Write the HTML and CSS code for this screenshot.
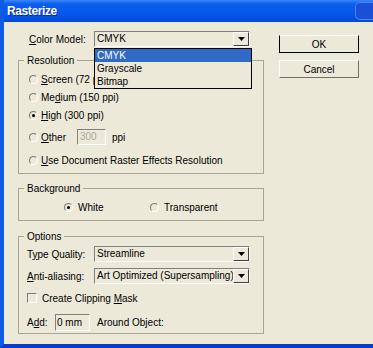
FILE: index.html
```html
<!DOCTYPE html>
<html>
  <head>
    <title>Rasterize</title>
    <link rel="stylesheet" href="styles.css">
  </head>
  <body>
    <div class="window">
      <div class="titlebar">
        <span class="title">Rasterize</span>
        <span class="title-cap"></span>
      </div>

      <div class="client">
        <div class="main">
          <div class="field-row top-row">
            <span class="field-label"><u>C</u>olor Model:</span>
            <div class="combo">
              <span class="combo-value">CMYK</span>
              <span class="combo-btn">
                <svg width="7" height="4" viewBox="0 0 7 4"><polygon points="0,0 7,0 3.5,4" fill="#000"/></svg>
              </span>
              <ul class="combo-list">
                <li class="selected">CMYK</li>
                <li>Grayscale</li>
                <li>Bitmap</li>
              </ul>
            </div>
          </div>

          <div class="group">
            <span class="legend">Resolution</span>
            <div class="group-body">
              <div class="option"><span class="radio"></span><span><u>S</u>creen (72 ppi)</span></div>
              <div class="option"><span class="radio"></span><span>Me<u>d</u>ium (150 ppi)</span></div>
              <div class="option"><span class="radio checked"></span><span><u>H</u>igh (300 ppi)</span></div>
              <div class="option option-other">
                <span class="radio"></span>
                <span class="other-label"><u>O</u>ther</span>
                <span class="textbox disabled">300</span>
                <span class="unit">ppi</span>
              </div>
              <div class="option option-last"><span class="radio"></span><span><u>U</u>se Document Raster Effects Resolution</span></div>
            </div>
          </div>

          <div class="group group-background">
            <span class="legend">Background</span>
            <div class="group-body bg-row">
              <div class="option bg-white"><span class="radio checked"></span><span>White</span></div>
              <div class="option"><span class="radio"></span><span>Transparent</span></div>
            </div>
          </div>

          <div class="group group-options">
            <span class="legend">Options</span>
            <div class="group-body">
              <div class="field-row">
                <span class="field-label label-inset">T<u>y</u>pe Quality:</span>
                <div class="combo">
                  <span class="combo-value">Streamline</span>
                  <span class="combo-btn">
                    <svg width="7" height="4" viewBox="0 0 7 4"><polygon points="0,0 7,0 3.5,4" fill="#000"/></svg>
                  </span>
                </div>
              </div>
              <div class="field-row second-combo">
                <span class="field-label label-inset"><u>A</u>nti-aliasing:</span>
                <div class="combo">
                  <span class="combo-value">Art Optimized (Supersampling)</span>
                  <span class="combo-btn">
                    <svg width="7" height="4" viewBox="0 0 7 4"><polygon points="0,0 7,0 3.5,4" fill="#000"/></svg>
                  </span>
                </div>
              </div>
              <div class="check-row">
                <span class="checkbox"></span>
                <span>Create Clipping <u>M</u>ask</span>
              </div>
              <div class="add-row">
                <span class="add-label">A<u>d</u>d:</span>
                <span class="textbox add-box">0 mm</span>
                <span class="add-after">Around Object:</span>
              </div>
            </div>
          </div>
        </div>

        <div class="buttons">
          <div class="btn btn-default">OK</div>
          <div class="btn">Cancel</div>
        </div>
      </div>
    </div>
  </body>
</html>
```

FILE: styles.css
```css
* {
  box-sizing: border-box;
  margin: 0;
  padding: 0;
}

body {
  width: 373px;
  height: 348px;
  overflow: hidden;
  background-color: #ECE9D8;
  font-family: "Liberation Sans", Arial, sans-serif;
  font-size: 10px;
  color: #000;
}

u {
  text-decoration: underline;
}

/* Ventana */
.window {
  height: 348px;
  display: flex;
  flex-direction: column;
  border-left: 4px solid #0C5AE6;
  border-bottom: 4px solid #0A3CCB;
  background-color: #ECE9D8;
}

.titlebar {
  position: relative;
  flex: none;
  height: 22px;
  display: flex;
  align-items: center;
  padding-left: 3px;
  overflow: hidden;
  background: linear-gradient(#3A86FA, #0B5FEC 18%, #0557EA 65%, #0449D6);
}

.title {
  font-size: 12px;
  font-weight: bold;
  letter-spacing: -0.4px;
  color: #fff;
  text-shadow: 1px 1px 0 #0A2F95;
}

.title-cap {
  position: absolute;
  right: -8px;
  top: 2px;
  width: 26px;
  height: 18px;
  border-radius: 5px;
  background: #1A4FD6;
  border: 1px solid #4A88F2;
}

.client {
  flex: 1;
  display: flex;
  gap: 15px;
  padding: 9px 0 0 14px;
}

.main {
  width: 246px;
}

/* Filas con etiqueta y combo */
.field-row {
  display: flex;
  align-items: center;
  height: 16px;
}

.field-label {
  width: 76px;
  padding-left: 11px;
}

.label-inset {
  width: 67px;
  padding-left: 0;
}

.combo {
  position: relative;
  width: 156px;
  height: 16px;
  display: flex;
  border: 1px solid;
  border-color: #808080 #fff #fff #808080;
}

.combo-value {
  flex: 1;
  padding-left: 2px;
  line-height: 14px;
  white-space: nowrap;
  overflow: hidden;
}

.combo-btn {
  width: 16px;
  display: flex;
  align-items: center;
  justify-content: center;
  border: 1px solid;
  border-color: #fff #404040 #404040 #fff;
}

.combo-list {
  position: absolute;
  left: -1px;
  top: 16px;
  width: 158px;
  list-style-type: none;
  border: 1px solid #000;
  background-color: #ECE9D8;
  z-index: 2;
}

.combo-list li {
  height: 13px;
  line-height: 13px;
  padding-left: 2px;
}

.combo-list li.selected {
  background-color: #316AC5;
  color: #fff;
}

/* Grupos */
.group {
  margin-top: 13px;
  border: 1px solid #A7A594;
  padding-bottom: 3px;
}

.group-background {
  margin-top: 14px;
  padding-bottom: 4px;
}

.group-options {
  margin-top: 15px;
  padding-bottom: 2px;
}

.legend {
  display: block;
  width: max-content;
  margin: -7px 0 0 5px;
  padding: 0 3px;
  line-height: 13px;
  background-color: #ECE9D8;
}

.group-body {
  padding-top: 3px;
}

.group-options .group-body {
  padding: 3px 0 0 8px;
}

.option {
  display: flex;
  align-items: center;
  gap: 3px;
  height: 18px;
  padding-left: 10px;
}

.option-other {
  height: 26px;
}

.option-last {
  height: 20px;
}

.radio {
  position: relative;
  width: 9px;
  height: 9px;
  border-radius: 50%;
  border: 1px solid;
  border-color: #7A7A7A #fff #fff #7A7A7A;
}

.radio.checked::after {
  content: "";
  position: absolute;
  left: 2px;
  top: 2px;
  width: 3px;
  height: 3px;
  border-radius: 50%;
  background-color: #000;
}

.other-label {
  width: 33px;
}

.textbox {
  height: 16px;
  line-height: 14px;
  padding-left: 2px;
  border: 1px solid;
  border-color: #808080 #fff #fff #808080;
}

.textbox.disabled {
  width: 29px;
  color: #ACA899;
}

.unit {
  margin-left: 3px;
}

.bg-row {
  display: flex;
  padding: 3px 0 0 35px;
}

.bg-white {
  width: 86px;
}

.bg-row .option {
  gap: 5px;
}

.second-combo {
  margin-top: 6px;
}

.check-row {
  display: flex;
  align-items: center;
  gap: 5px;
  height: 20px;
  margin-top: 4px;
}

.checkbox {
  width: 10px;
  height: 10px;
  border: 1px solid;
  border-color: #7A7A7A #fff #fff #7A7A7A;
}

.add-row {
  display: flex;
  align-items: center;
  height: 18px;
  margin-top: 5px;
}

.add-label {
  width: 28px;
}

.add-box {
  width: 35px;
  height: 17px;
  line-height: 15px;
  padding-left: 1px;
}

.add-after {
  margin-left: 7px;
}

/* Botones */
.buttons {
  display: flex;
  flex-direction: column;
  gap: 7px;
  padding-top: 4px;
}

.btn {
  width: 80px;
  height: 18px;
  display: flex;
  align-items: center;
  justify-content: center;
  border: 1px solid;
  border-color: #fff #716F64 #716F64 #fff;
}

.btn-default {
  border-color: #fff #000 #000 #000;
}
```
